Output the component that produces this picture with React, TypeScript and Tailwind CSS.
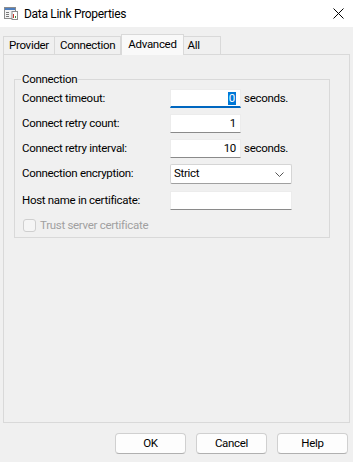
import React from 'react';

const font = { fontFamily: '"Segoe UI", Roboto, "Liberation Sans", sans-serif' };

function Field({ value, width, focused }: { value: string; width: string; focused?: boolean }) {
  return (
    <div
      className={`${width} h-[19px] bg-white border border-[#ececec] ${
        focused ? 'border-b-2 border-b-[#0067c0]' : 'border-b-[#8a8a8a]'
      } flex items-center justify-end pr-[4px] text-black`}
    >
      {focused ? <span className="bg-[#0078d7] text-white leading-[13px] px-[1px]">{value}</span> : value}
    </div>
  );
}

export default function App() {
  const tabs = ['Provider', 'Connection', 'Advanced', 'All'];

  return (
    <div
      className="w-[353px] h-[462px] bg-[#f0f0f0] flex flex-col text-[11.5px] tracking-[-0.3px] text-black"
      style={font}
    >
      {/* Title bar */}
      <div className="h-[27px] bg-white flex items-center pl-[4px] pr-[9px]">
        <svg width="14" height="13" viewBox="0 0 14 13" className="mr-[6px]">
          <rect x="0.5" y="0.5" width="11" height="11" fill="#f4f4f4" stroke="#8c8c8c" />
          <rect x="1" y="1" width="10" height="2" fill="#4f7fbf" />
          <rect x="2" y="5" width="3" height="1" fill="#7a7a7a" />
          <rect x="2" y="7" width="3" height="1" fill="#7a7a7a" />
          <rect x="2" y="9" width="3" height="1" fill="#7a7a7a" />
          <rect x="8" y="4.5" width="5.5" height="8" fill="#ffffff" stroke="#8c8c8c" />
          <rect x="9" y="7" width="1" height="4" fill="#c0392b" />
          <rect x="11" y="9" width="1" height="2" fill="#3a8a3a" />
        </svg>
        <span className="text-[12px] mt-[1px]">Data Link Properties</span>
        <div className="flex-1" />
        <svg width="11" height="11" viewBox="0 0 11 11">
          <path d="M0.5 0.5 L10.5 10.5 M10.5 0.5 L0.5 10.5" stroke="#000" strokeWidth="1" />
        </svg>
      </div>

      {/* Tabs */}
      <div className="px-[3px] pt-[7px] flex items-end">
        {tabs.map((t, i) => {
          const active = t === 'Advanced';
          return (
            <div
              key={t}
              className={
                active
                  ? 'h-[21px] -mb-px z-10 bg-[#f9f9f9] border border-[#d9d9d9] border-b-0 px-[6px] flex items-start pt-[1px]'
                  : `h-[18px] bg-[#f0f0f0] border border-[#d9d9d9] border-b-0 ${i > 0 ? '-ml-px' : ''} ${
                      t === 'All' ? 'pr-[20px] pl-[4px] -ml-px' : 'px-[5px]'
                    } flex items-center`
              }
            >
              {t}
            </div>
          );
        })}
      </div>

      {/* Tab panel */}
      <div className="mx-[3px] h-[369px] border border-[#d9d9d9] bg-[#f0f0f0] pt-[17px] px-[10px]">
        <fieldset className="w-[316px] h-[166px] border border-[#d9d9d9] px-[7px] pt-[1px]">
          <legend className="px-[1px] ml-[-1px] leading-[14px]">Connection</legend>
          <div className="flex flex-col gap-[6px] mt-[2px]">
            <div className="flex items-center h-[19px]">
              <span className="w-[148px]">Connect timeout:</span>
              <Field value="0" width="w-[71px]" focused />
              <span className="ml-[3px]">seconds.</span>
            </div>
            <div className="flex items-center h-[19px]">
              <span className="w-[148px]">Connect retry count:</span>
              <Field value="1" width="w-[71px]" />
            </div>
            <div className="flex items-center h-[19px]">
              <span className="w-[148px]">Connect retry interval:</span>
              <Field value="10" width="w-[71px]" />
              <span className="ml-[3px]">seconds.</span>
            </div>
            <div className="flex items-center h-[20px]">
              <span className="w-[148px]">Connection encryption:</span>
              <div className="w-[122px] h-[20px] bg-white border border-[#d5d5d5] border-b-[#a0a0a0] rounded-[2px] flex items-center pl-[3px] pr-[7px]">
                <span className="flex-1">Strict</span>
                <svg width="9" height="5" viewBox="0 0 9 5">
                  <path d="M0.5 0.5 L4.5 4.5 L8.5 0.5" fill="none" stroke="#555" strokeWidth="1" />
                </svg>
              </div>
            </div>
            <div className="flex items-center h-[19px] mt-[1px]">
              <span className="w-[148px]">Host name in certificate:</span>
              <Field value="" width="w-[122px]" />
            </div>
            <div className="flex items-center h-[19px]">
              <div className="w-[13px] h-[13px] ml-[1px] border border-[#cfcfcf] rounded-[3px] bg-[#f5f5f5]" />
              <span className="ml-[4px] text-[#a0a0a0]">Trust server certificate</span>
            </div>
          </div>
        </fieldset>
      </div>

      {/* Buttons */}
      <div className="flex justify-end gap-[10px] pr-[5px] pt-[10px]">
        {['OK', 'Cancel', 'Help'].map((b) => (
          <button
            key={b}
            className="w-[71px] h-[21px] bg-[#fdfdfd] border border-[#d0d0d0] border-b-[#b0b0b0] rounded-[4px] flex items-center justify-center"
          >
            {b}
          </button>
        ))}
      </div>
    </div>
  );
}
